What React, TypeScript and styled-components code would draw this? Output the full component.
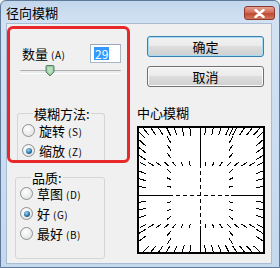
import React from 'react';
import styled, { createGlobalStyle } from 'styled-components';

const Global = createGlobalStyle`
  html, body { margin: 0; padding: 0; background: #f0f0f0; }
  body { font-family: "Noto Sans CJK SC", "Noto Sans", sans-serif; color: #000; }
`;

const Window = styled.div`
  width: 280px;
  height: 268px;
  box-sizing: border-box;
  border: 1px solid #5f7a98;
  border-radius: 6px 6px 0 0;
  background: linear-gradient(#c2d6ec, #d3e2f3 22px, #c4d8ee);
  display: flex;
  flex-direction: column;
  padding: 0 7px 3px 5px;
`;

const TitleBar = styled.div`
  height: 22px;
  flex-shrink: 0;
  display: flex;
  align-items: center;
  justify-content: space-between;
`;

const Title = styled.span`
  font-size: 13px;
  line-height: 1;
  margin-top: 1px;
`;

const CloseButton = styled.div`
  width: 31px;
  height: 14px;
  margin-right: -3px;
  margin-top: 2px;
  box-sizing: border-box;
  border: 1px solid #8b3a2c;
  border-radius: 3px;
  background: linear-gradient(#e6a394, #d06e58 45%, #c04a30 55%, #d2775f);
  display: flex;
  align-items: center;
  justify-content: center;
`;

const Client = styled.div`
  flex: 1;
  background: #f0f0f0;
  border: 1px solid #a8bcd3;
  display: flex;
  flex-direction: row;
  overflow: hidden;
`;

const LeftColumn = styled.div`
  width: 124px;
  flex-shrink: 0;
  display: flex;
  flex-direction: column;
  & > * { flex-shrink: 0; }
`;

const RedBox = styled.div`
  margin: 2px 0 0 0;
  width: 123px;
  height: 137px;
  box-sizing: border-box;
  border: 3px solid #e8282a;
  border-radius: 6px;
  display: flex;
  flex-direction: column;
  padding: 0 0 0 7px;
  overflow: hidden;
  & > * { flex-shrink: 0; }
`;

const AmountRow = styled.div`
  display: flex;
  align-items: center;
  margin-top: 15px;
  padding-left: 5px;
`;

const Label = styled.span`
  font-size: 13px;
  line-height: 1;
  white-space: nowrap;
`;

const Key = styled.span`
  font-size: 10px;
  margin-left: 3px;
  letter-spacing: 0.5px;
`;

const NumberBox = styled.div`
  width: 31px;
  height: 19px;
  box-sizing: border-box;
  margin-left: auto;
  margin-right: 6px;
  border: 1px solid #a9b6c6;
  border-top-color: #9aa7b8;
  background: #fff;
  display: flex;
  align-items: center;
  padding-left: 3px;
`;

const Selected = styled.span`
  background: #3399ff;
  color: #fff;
  font-size: 12px;
  line-height: 13px;
  padding: 0 1px;
`;

const SliderWrap = styled.div`
  position: relative;
  height: 14px;
  margin: 2px 6px 0 3px;
`;

const Track = styled.div`
  position: absolute;
  left: 0;
  right: 0;
  top: 5px;
  height: 2px;
  border-radius: 1px;
  background: #e7eaea;
  border-top: 1px solid #b0b0b0;
  border-bottom: 1px solid #fff;
`;

const Thumb = styled.svg`
  position: absolute;
  left: 25px;
  top: 0;
`;

const MethodWrap = styled.div`
  margin-top: 28px;
`;

const Group = styled.fieldset<{ $w: number; $h: number; $noBottom?: boolean }>`
  width: ${(p) => p.$w}px;
  height: ${(p) => p.$h}px;
  box-sizing: border-box;
  margin: 0;
  padding: 0 0 0 4px;
  border: 1px solid #d5d5d5;
  border-radius: 3px;
  ${(p) => (p.$noBottom ? 'border-bottom-color: transparent;' : '')}
`;

const Legend = styled.legend`
  font-size: 13px;
  line-height: 13px;
  padding: 0 1px;
  margin-left: 11px;
`;

const RadioList = styled.div<{ $mt: number }>`
  display: flex;
  flex-direction: column;
  gap: 5px;
  margin-top: ${(p) => p.$mt}px;
`;

const RadioRow = styled.div`
  display: flex;
  align-items: center;
  gap: 4px;
  height: 15px;
`;

const RadioDot = styled.span<{ $on?: boolean }>`
  width: 11px;
  height: 11px;
  border-radius: 50%;
  border: 1px solid #8f9193;
  background: radial-gradient(circle at 40% 35%, #ffffff, #e2e3e4 80%);
  display: flex;
  align-items: center;
  justify-content: center;
  &::after {
    content: '';
    display: ${(p) => (p.$on ? 'block' : 'none')};
    width: 6px;
    height: 6px;
    border-radius: 50%;
    background: radial-gradient(circle at 40% 35%, #9fd9f6, #2a73a8 55%, #174a76);
  }
`;

const QualityWrap = styled.div`
  margin: 8px 0 0 8px;
`;

const RightColumn = styled.div`
  flex: 1;
  display: flex;
  flex-direction: column;
  padding-left: 6px;
  & > * { flex-shrink: 0; }
`;

const Button = styled.div<{ $default?: boolean; $top: number }>`
  width: 117px;
  height: 21px;
  box-sizing: border-box;
  margin: ${(p) => p.$top}px 0 0 10px;
  border: 1px solid ${(p) => (p.$default ? '#3c7fb1' : '#707070')};
  border-radius: 3px;
  background: linear-gradient(#f2f2f2, #ebebeb 45%, #dddddd 50%, #cfcfcf);
  box-shadow: inset 0 0 0 1px ${(p) => (p.$default ? '#a7dcf5' : '#fbfbfb')};
  font-size: 13px;
  display: flex;
  align-items: center;
  justify-content: center;
`;

const PreviewLabel = styled.div`
  font-size: 13px;
  line-height: 13px;
  margin-top: 19px;
`;

const PreviewBox = styled.div`
  width: 128px;
  height: 128px;
  box-sizing: border-box;
  margin-top: 7px;
  border: 2px solid #000;
  background: #fff;
  display: flex;
`;

const Radio = ({ on, label, k }: { on?: boolean; label: string; k: string }) => (
  <RadioRow>
    <RadioDot $on={on} />
    <Label>
      {label}
      <Key>({k})</Key>
    </Label>
  </RadioRow>
);

function buildSegments() {
  const W = 124;
  const cx = 61;
  const cy = 67;
  const segs: [number, number, number, number][] = [];
  const add = (x: number, y: number, edge: boolean) => {
    const dx = x - cx;
    const dy = y - cy;
    if (Math.abs(dx) < 4 || Math.abs(dy) < 4) return;
    const r = Math.hypot(dx, dy);
    const ux = dx / r;
    const uy = dy / r;
    const L = 2.5 + r * 0.075;
    if (edge) {
      segs.push([x, y, x - ux * L, y - uy * L]);
    } else {
      segs.push([x - (ux * L) / 2, y - (uy * L) / 2, x + (ux * L) / 2, y + (uy * L) / 2]);
    }
  };
  const rows = [0, cy - 31, cy + 31, W];
  const cols = [0, cx - 31, cx + 31, W];
  rows.forEach((y, i) => {
    for (let x = 4; x < W; x += 7.8) add(x, y, i === 0 || i === 3);
  });
  cols.forEach((x, i) => {
    for (let y = 4; y < W; y += 7.8) {
      if (rows.some((ry) => Math.abs(ry - y) < 4)) continue;
      add(x, y, i === 0 || i === 3);
    }
  });
  return { segs, cx, cy, W };
}

const Preview = () => {
  const { segs, cx, cy, W } = buildSegments();
  return (
    <svg width={W} height={W} viewBox={`0 0 ${W} ${W}`} shapeRendering="crispEdges">
      {segs.map((s, i) => (
        <line key={i} x1={s[0]} y1={s[1]} x2={s[2]} y2={s[3]} stroke="#000" strokeWidth={1} />
      ))}
      <line x1={cx + 0.5} y1={0} x2={cx + 0.5} y2={cy - 31} stroke="#000" />
      <line x1={cx + 0.5} y1={cy - 31} x2={cx + 0.5} y2={cy + 31} stroke="#000" strokeDasharray="4 3" />
      <line x1={cx + 0.5} y1={cy + 31} x2={cx + 0.5} y2={W} stroke="#000" />
      <line x1={0} y1={cy + 0.5} x2={cx - 31} y2={cy + 0.5} stroke="#000" />
      <line x1={cx - 31} y1={cy + 0.5} x2={cx + 31} y2={cy + 0.5} stroke="#000" strokeDasharray="4 3" />
      <line x1={cx + 31} y1={cy + 0.5} x2={W} y2={cy + 0.5} stroke="#000" />
    </svg>
  );
};

export default function App() {
  return (
    <>
      <Global />
      <Window>
        <TitleBar>
          <Title>径向模糊</Title>
          <CloseButton>
            <svg width="11" height="9" viewBox="0 0 11 9">
              <path d="M1.5 1 L9.5 8 M9.5 1 L1.5 8" stroke="#fff" strokeWidth="2.4" strokeLinecap="round" />
            </svg>
          </CloseButton>
        </TitleBar>
        <Client>
          <LeftColumn>
            <RedBox>
              <AmountRow>
                <Label>
                  数量<Key>(A)</Key>
                </Label>
                <NumberBox>
                  <Selected>29</Selected>
                </NumberBox>
              </AmountRow>
              <SliderWrap>
                <Track />
                <Thumb width="10" height="12" viewBox="0 0 10 12">
                  <path d="M1 1.5 Q1 0.5 2 0.5 L8 0.5 Q9 0.5 9 1.5 L9 7 L5 11 L1 7 Z" fill="#8fc69a" stroke="#5e7e66" />
                  <path d="M2.5 2 L7.5 2 L7.5 6.5 L5 9 L2.5 6.5 Z" fill="#b9e0bf" />
                </Thumb>
              </SliderWrap>
              <MethodWrap>
                <Group $w={88} $h={60} $noBottom>
                  <Legend>模糊方法:</Legend>
                  <RadioList $mt={3}>
                    <Radio label="旋转" k="S" />
                    <Radio on label="缩放" k="Z" />
                  </RadioList>
                </Group>
              </MethodWrap>
            </RedBox>
            <QualityWrap>
              <Group $w={90} $h={88}>
                <Legend>品质:</Legend>
                <RadioList $mt={2}>
                  <Radio label="草图" k="D" />
                  <Radio on label="好" k="G" />
                  <Radio label="最好" k="B" />
                </RadioList>
              </Group>
            </QualityWrap>
          </LeftColumn>
          <RightColumn>
            <Button $default $top={12}>确定</Button>
            <Button $top={9}>取消</Button>
            <PreviewLabel>中心模糊</PreviewLabel>
            <PreviewBox>
              <Preview />
            </PreviewBox>
          </RightColumn>
        </Client>
      </Window>
    </>
  );
}
